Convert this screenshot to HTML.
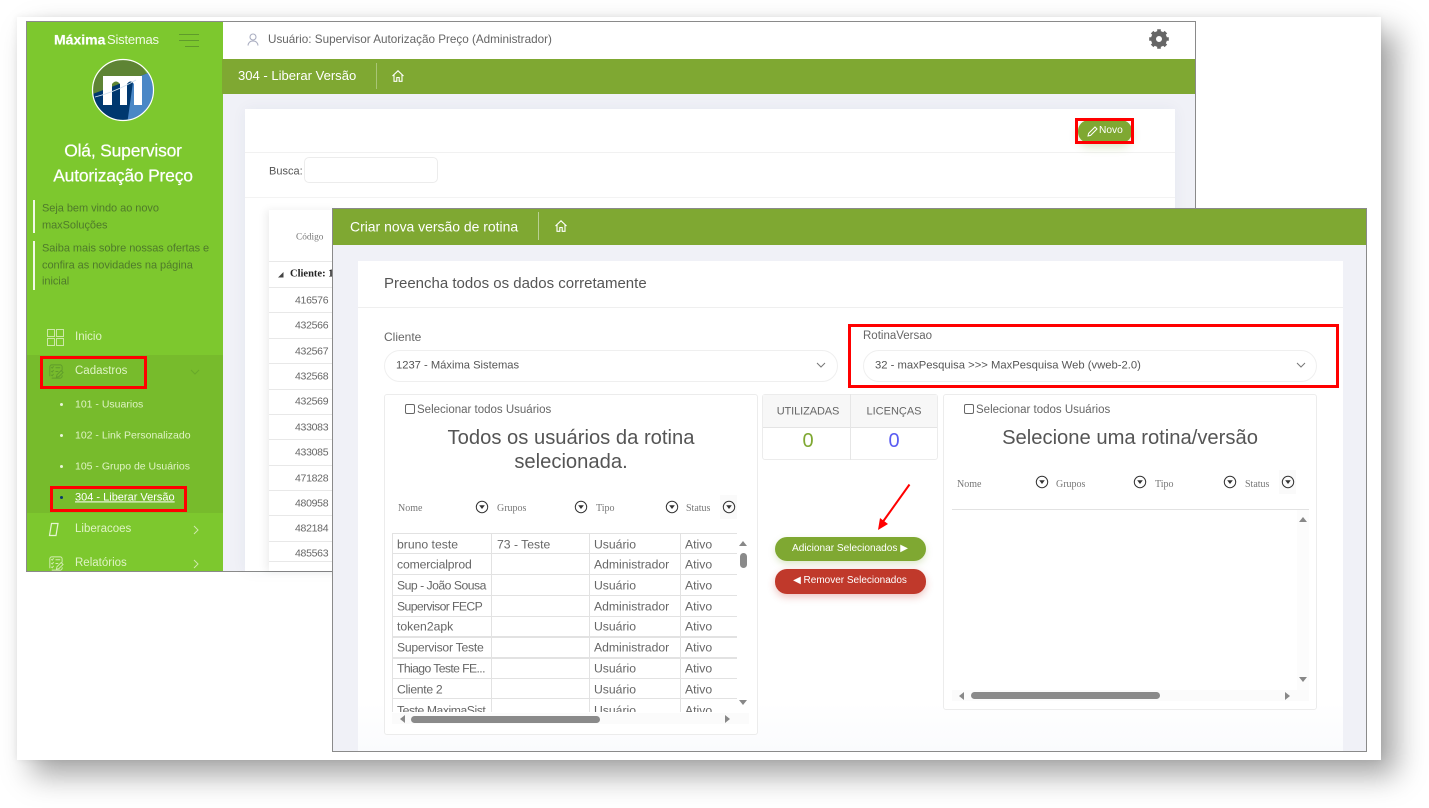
<!DOCTYPE html>
<html lang="pt-BR">
<head>
<meta charset="utf-8">
<title>Criar nova versão de rotina</title>
<style>
html,body{margin:0;padding:0;background:#fff}
body{width:1429px;height:808px;position:relative;overflow:hidden;font-family:"Liberation Sans",sans-serif;color:#555;filter:blur(.3px)}
div,span,svg{position:absolute;box-sizing:border-box}
.t{white-space:nowrap;transform:translateY(calc(-50% + 1px));line-height:1.2}
.c{transform:translate(-50%,calc(-50% + 1px));text-align:center}
.paper{left:17px;top:17px;width:1364px;height:743px;background:#fff;box-shadow:15px 15px 28px rgba(0,0,0,.36),0 0 7px rgba(0,0,0,.07)}
.win{border:1px solid #8a8a8a;overflow:hidden;background:#f0f1f7}
.red{border:3px solid #f00;z-index:5}
.side{font-size:11.500px;color:#dff3c4}
.sub{font-size:10.500px}
.note{font-size:11px;letter-spacing:-.05px;color:#4f7a2b;left:42px}
.num{font-size:10.500px;letter-spacing:-.3px;color:#666;left:295px}
.hl{height:1px;background:#e8e8e8;left:269px;width:70px}
.th{font-family:"Liberation Serif",serif;font-size:10px;color:#777;transform:translateY(calc(-50% + 2px))}
.row{font-size:12.200px;color:#666}
.panel{border:1px solid #ececec;border-radius:3px;background:#fff}
.sel{border:1px solid #efefef;border-radius:16px;background:#fff;height:32px}
.title{font-size:20.200px;color:#555}
.cb{width:10px;height:10px;border:1px solid #666;border-radius:2px;background:#fff}
.lbl{font-size:11.500px;color:#666}
.gl{background:#e2e2e2}
.bar{background:#8a8a8a;border-radius:4px}
.bold{text-shadow:0 0 .6px #fff}
</style>
</head>
<body>
<svg width="0" height="0" style="left:0;top:0">
  <defs>
    <symbol id="f" viewBox="0 0 14 14"><circle cx="7" cy="7" r="5.700" fill="none" stroke="#333" stroke-width="1"/><path d="M4.200 5.200h5.600L7 9z" fill="#333"/></symbol>
    <symbol id="h" viewBox="0 0 14 14"><path d="M1.500 7 7 1.800 12.500 7M3 6v6.300h2.800V8.500h2.400v3.800H11V6" fill="none" stroke="#fff" stroke-width="1.100"/></symbol>
    <symbol id="chk" viewBox="0 0 18 18"><path d="M3 14V4a2 2 0 0 1 2-2h9a2 2 0 0 1 2 2v4M16 13v1a2 2 0 0 1-2 2H5M9 5h5M9 9h3M4.500 4.500l1 1 1.500-2M4.500 8.500l1 1 1.500-2M4.500 12.500l1 1 1.500-2M10 15l.5-2.500L15 8l2 2-4.500 4.500z" fill="none" stroke="currentColor" stroke-width="1"/></symbol>
  </defs>
</svg>

<div class="paper"></div>

<!-- Back window -->
<div class="win" style="left:26px;top:21px;width:1170px;height:551px"></div>
<div style="left:27px;top:22px;width:196px;height:549px;background:#7dc82e"></div>
<div style="left:27px;top:355px;width:196px;height:158px;background:#77bb2c"></div>
<div style="left:223px;top:22px;width:972px;height:37px;background:#fff"></div>
<div style="left:222px;top:59px;width:973px;height:35px;background:#7fa832"></div>
<div style="left:245px;top:109px;width:930px;height:462px;background:#fff;box-shadow:0 0 14px rgba(40,50,90,.05)"></div>
<div style="left:245px;top:152px;width:930px;height:1px;background:#f1f1f1"></div>
<div style="left:245px;top:197px;width:930px;height:1px;background:#f3f3f3"></div>

<div class="t bold" style="left:54px;top:39px;font-size:14px;font-weight:700;color:#fff">Máxima</div>
<div class="t" style="left:107px;top:39px;font-size:13px;color:#f2fae6;letter-spacing:-.2px">Sistemas</div>
<div style="left:179px;top:34px;width:20px;height:1px;background:#5f9b2b"></div>
<div style="left:179px;top:40px;width:20px;height:1px;background:#5f9b2b"></div>
<div style="left:185px;top:46px;width:14px;height:1px;background:#5f9b2b"></div>

<svg style="left:90px;top:57px" width="66" height="66" viewBox="90 57 66 66">
  <defs><clipPath id="lc"><circle cx="123" cy="90" r="30"/></clipPath></defs>
  <g clip-path="url(#lc)">
    <rect x="90" y="57" width="66" height="66" fill="#5e8434"/>
    <path d="M138 60 156 60 156 78 147 74z" fill="#6fbf3e"/>
    <path d="M90 95 147 73.500 156 70V125H90z" fill="#00386f"/>
    <path d="M133.500 78.500 147 73.500 156 70V125H127z" fill="#4a87c6"/>
    <path d="M103 105V76H142V105H134V84q-3.500-5-7 0V105H120V84q-4-5-8 0V105z" fill="#fff"/>
    <path d="M95 97Q115 92 136 80" fill="none" stroke="#cfe0ee" stroke-width=".9"/>
  </g>
  <circle cx="123" cy="90" r="30.500" fill="none" stroke="#fff" stroke-width="1.200"/>
</svg>

<div class="t c bold" style="left:123px;top:150px;font-size:17.500px;color:#fff;letter-spacing:-.2px">Olá, Supervisor</div>
<div class="t c bold" style="left:123px;top:175px;font-size:17.500px;color:#fff;letter-spacing:-.2px">Autorização Preço</div>

<div style="left:33px;top:200px;width:2px;height:33px;background:#f1f8e6"></div>
<div style="left:33px;top:241px;width:2px;height:49px;background:#f1f8e6"></div>
<div class="t note" style="top:208px">Seja bem vindo ao novo</div>
<div class="t note" style="top:225px">maxSoluções</div>
<div class="t note" style="top:248px">Saiba mais sobre nossas ofertas e</div>
<div class="t note" style="top:265px">confira as novidades na página</div>
<div class="t note" style="top:281px">inicial</div>

<svg style="left:47px;top:329px" width="17" height="17" viewBox="0 0 17 17" fill="none" stroke="#cde8a8" stroke-width="1"><rect x=".5" y=".5" width="7" height="7"/><rect x="9.500" y=".5" width="7" height="7"/><rect x=".5" y="9.500" width="7" height="7"/><rect x="9.500" y="9.500" width="7" height="7"/></svg>
<svg style="left:47px;top:363px;color:#5f9b2b" width="17" height="17"><use href="#chk"/></svg>
<svg style="left:48px;top:522px" width="12" height="15" viewBox="0 0 12 15" fill="none" stroke="#e6f5d2" stroke-width="1.200"><path d="M3.500 1.500h6.500L8 13.500H1.500z"/></svg>
<svg style="left:47px;top:555px;color:#d5edb5" width="17" height="17"><use href="#chk"/></svg>

<div class="t side" style="left:75px;top:337px">Inicio</div>
<div class="t side" style="left:75px;top:371px">Cadastros</div>
<div class="t side sub" style="left:75px;top:404px">101 - Usuarios</div>
<div class="t side sub" style="left:75px;top:435px">102 - Link Personalizado</div>
<div class="t side sub" style="left:75px;top:466px">105 - Grupo de Usuários</div>
<div class="t" style="left:75px;top:497px;font-size:11px;color:#fff;text-decoration:underline">304 - Liberar Versão</div>
<div class="t side" style="left:75px;top:529px">Liberacoes</div>
<div class="t side" style="left:75px;top:563px">Relatórios</div>
<div style="left:60px;top:403px;width:3px;height:3px;border-radius:50%;background:#e9f6d8"></div>
<div style="left:60px;top:434px;width:3px;height:3px;border-radius:50%;background:#e9f6d8"></div>
<div style="left:60px;top:465px;width:3px;height:3px;border-radius:50%;background:#e9f6d8"></div>
<div style="left:60px;top:496px;width:3px;height:3px;border-radius:50%;background:#0a3a6b"></div>
<svg style="left:190px;top:368px" width="10" height="8" fill="none" stroke="#68a82a"><path d="M1 2l4 4 4-4"/></svg>
<svg style="left:192px;top:525px" width="8" height="10" fill="none" stroke="#cfe9ac"><path d="M2 1l4 4-4 4"/></svg>
<svg style="left:192px;top:559px" width="8" height="10" fill="none" stroke="#cfe9ac"><path d="M2 1l4 4-4 4"/></svg>

<svg style="left:247px;top:33px" width="12" height="13" viewBox="0 0 12 13" fill="none" stroke="#a9adc0" stroke-width="1.100"><circle cx="6" cy="4" r="3"/><path d="M1 12.500c.4-3 2.400-4.500 5-4.500s4.600 1.500 5 4.500"/></svg>
<div class="t" style="left:268px;top:39px;font-size:11.700px;color:#666">Usuário: Supervisor Autorização Preço (Administrador)</div>
<svg style="left:1149px;top:29px" width="20" height="20" viewBox="0 0 20 20"><circle cx="10" cy="10" r="5.500" fill="none" stroke="#666" stroke-width="5"/><g stroke="#666" stroke-width="3.600"><path d="M10 .2v3M10 16.800v3M.2 10h3M16.800 10h3M3.100 3.100l2.100 2.100M14.800 14.800l2.100 2.100M3.100 16.900l2.100-2.100M14.800 5.200l2.100-2.100"/></g></svg>

<div class="t" style="left:238px;top:75px;font-size:13.050px;color:#fff">304 - Liberar Versão</div>
<div style="left:376px;top:63px;width:1px;height:26px;background:#a9c576"></div>
<svg style="left:391px;top:69px" width="14" height="14"><use href="#h"/></svg>

<div class="t" style="left:269px;top:171px;font-size:11px;color:#555">Busca:</div>
<div style="left:304px;top:157px;width:134px;height:26px;border:1px solid #ececec;border-radius:5px;background:#fff"></div>

<div style="left:1078px;top:120px;width:54px;height:23px;border-radius:11px;background:#7fa832;box-shadow:0 4px 9px rgba(127,168,50,.3)"></div>
<svg style="left:1087px;top:126px" width="11" height="11" viewBox="0 0 11 11" fill="none" stroke="#fff" stroke-width="1"><path d="M1 10l.6-2.600L8 1l2 2-6.400 6.400z"/></svg>
<div class="t" style="left:1099px;top:130px;font-size:10.200px;color:#fff">Novo</div>
<div class="red" style="left:1075px;top:118px;width:59px;height:26px"></div>

<!-- Back table -->
<div style="left:269px;top:210px;width:70px;height:361px;background:#fff;box-shadow:-3px 0 8px rgba(0,0,0,.07)"></div>
<div class="t th" style="left:296px;top:236px;font-size:9.300px">Código</div>
<div class="hl" style="top:261px"></div>
<svg style="left:278px;top:272px" width="6" height="6"><path d="M0 5.500h5.500V0z" fill="#444"/></svg>
<div class="t" style="left:290px;top:274px;font-family:'Liberation Serif',serif;font-weight:700;font-size:10.500px;color:#222;width:42px;overflow:hidden">Cliente: 1</div>
<div class="hl" style="top:287px"></div><div class="hl" style="top:312px"></div><div class="hl" style="top:338px"></div><div class="hl" style="top:363px"></div><div class="hl" style="top:389px"></div><div class="hl" style="top:414px"></div><div class="hl" style="top:439px"></div><div class="hl" style="top:465px"></div><div class="hl" style="top:490px"></div><div class="hl" style="top:515px"></div><div class="hl" style="top:541px"></div><div class="hl" style="top:561px"></div>
<div class="t num" style="top:300px">416576</div>
<div class="t num" style="top:325px">432566</div>
<div class="t num" style="top:351px">432567</div>
<div class="t num" style="top:376px">432568</div>
<div class="t num" style="top:401px">432569</div>
<div class="t num" style="top:427px">433083</div>
<div class="t num" style="top:452px">433085</div>
<div class="t num" style="top:478px">471828</div>
<div class="t num" style="top:503px">480958</div>
<div class="t num" style="top:528px">482184</div>
<div class="t num" style="top:553px">485563</div>

<div class="red" style="left:40px;top:356px;width:107px;height:33px"></div>
<div class="red" style="left:50px;top:486px;width:137px;height:26px"></div>

<!-- Front window -->
<div class="win" style="left:332px;top:208px;width:1035px;height:544px;z-index:2">
  <div style="left:0;top:0;width:1033px;height:36px;background:#7fa832"></div>
  <div style="left:25px;top:52px;width:985px;height:490px;background:linear-gradient(#fff 0,#fff 90%,#fafbfd 100%)"></div>
  <div style="left:25px;top:98px;width:985px;height:1px;background:#efefef"></div>
</div>

<div style="left:0;top:0;width:1429px;height:808px;z-index:3">
  <div class="t" style="left:350px;top:226px;font-size:13.950px;color:#fff">Criar nova versão de rotina</div>
  <div style="left:538px;top:212px;width:1px;height:28px;background:#b9d093"></div>
  <svg style="left:554px;top:219px" width="14" height="14"><use href="#h"/></svg>
  <div class="t" style="left:384px;top:283px;font-size:15px;color:#555">Preencha todos os dados corretamente</div>

  <div class="t" style="left:384px;top:336px;font-size:12px;color:#666">Cliente</div>
  <div class="sel" style="left:384px;top:350px;width:454px"></div>
  <div class="t" style="left:396px;top:365px;font-size:11.200px;color:#555">1237 - Máxima Sistemas</div>
  <svg style="left:816px;top:362px" width="10" height="7" fill="none" stroke="#777"><path d="M1 1l4 4 4-4"/></svg>

  <div class="t" style="left:863px;top:336px;font-size:11.500px;color:#666">RotinaVersao</div>
  <div class="sel" style="left:863px;top:350px;width:454px"></div>
  <div class="t" style="left:875px;top:365px;font-size:11.250px;color:#555">32 - maxPesquisa &gt;&gt;&gt; MaxPesquisa Web (vweb-2.0)</div>
  <svg style="left:1296px;top:362px" width="10" height="7" fill="none" stroke="#777"><path d="M1 1l4 4 4-4"/></svg>
  <div class="red" style="left:848px;top:324px;width:491px;height:64px"></div>

  <!-- Left panel -->
  <div class="panel" style="left:384px;top:394px;width:374px;height:341px"></div>
  <div class="cb" style="left:405px;top:404px"></div>
  <div class="t lbl" style="left:417px;top:410px">Selecionar todos Usuários</div>
  <div class="t c title" style="left:571px;top:437px">Todos os usuários da rotina</div>
  <div class="t c title" style="left:571px;top:461px">selecionada.</div>

  <div class="t th" style="left:398px;top:507px">Nome</div>
  <div class="t th" style="left:497px;top:507px">Grupos</div>
  <div class="t th" style="left:596px;top:507px">Tipo</div>
  <div class="t th" style="left:686px;top:507px">Status</div>
  <div style="left:720px;top:495px;width:17px;height:24px;background:#fafafa"></div>
  <svg style="left:475px;top:500px" width="14" height="14"><use href="#f"/></svg>
  <svg style="left:574px;top:500px" width="14" height="14"><use href="#f"/></svg>
  <svg style="left:665px;top:500px" width="14" height="14"><use href="#f"/></svg>
  <svg style="left:722px;top:500px" width="14" height="14"><use href="#f"/></svg>

  <div style="left:392px;top:533px;width:345px;height:179px;overflow:hidden">
    <div class="gl" style="left:0;top:0;width:345px;height:1px"></div>
    <div class="gl" style="left:0;top:20px;width:345px;height:1px"></div>
    <div class="gl" style="left:0;top:41px;width:345px;height:1px"></div>
    <div class="gl" style="left:0;top:62px;width:345px;height:1px"></div>
    <div class="gl" style="left:0;top:83px;width:345px;height:1px"></div>
    <div class="gl" style="left:0;top:103px;width:345px;height:2px"></div>
    <div class="gl" style="left:0;top:124px;width:345px;height:2px"></div>
    <div class="gl" style="left:0;top:145px;width:345px;height:1px"></div>
    <div class="gl" style="left:0;top:165px;width:345px;height:1px"></div>
    <div class="gl" style="left:0;top:0;width:1px;height:179px"></div>
    <div class="gl" style="left:99px;top:0;width:1px;height:179px"></div>
    <div class="gl" style="left:197px;top:0;width:1px;height:179px"></div>
    <div class="gl" style="left:288px;top:0;width:1px;height:179px"></div>
    <div class="t row" style="left:5px;top:11px">bruno teste</div><div class="t row" style="left:105px;top:11px">73 - Teste</div><div class="t row" style="left:202px;top:11px">Usuário</div><div class="t row" style="left:293px;top:11px">Ativo</div>
    <div class="t row" style="left:5px;top:31px;letter-spacing:-.15px">comercialprod</div><div class="t row" style="left:202px;top:31px">Administrador</div><div class="t row" style="left:293px;top:31px">Ativo</div>
    <div class="t row" style="left:5px;top:52px;letter-spacing:-.5px">Sup - João Sousa</div><div class="t row" style="left:202px;top:52px">Usuário</div><div class="t row" style="left:293px;top:52px">Ativo</div>
    <div class="t row" style="left:5px;top:73px;letter-spacing:-.6px">Supervisor FECP</div><div class="t row" style="left:202px;top:73px">Administrador</div><div class="t row" style="left:293px;top:73px">Ativo</div>
    <div class="t row" style="left:5px;top:93px">token2apk</div><div class="t row" style="left:202px;top:93px">Usuário</div><div class="t row" style="left:293px;top:93px">Ativo</div>
    <div class="t row" style="left:5px;top:114px;letter-spacing:-.25px">Supervisor Teste</div><div class="t row" style="left:202px;top:114px">Administrador</div><div class="t row" style="left:293px;top:114px">Ativo</div>
    <div class="t row" style="left:5px;top:135px;letter-spacing:-.6px">Thiago Teste FE...</div><div class="t row" style="left:202px;top:135px">Usuário</div><div class="t row" style="left:293px;top:135px">Ativo</div>
    <div class="t row" style="left:5px;top:156px;letter-spacing:-.3px">Cliente 2</div><div class="t row" style="left:202px;top:156px">Usuário</div><div class="t row" style="left:293px;top:156px">Ativo</div>
    <div class="t row" style="left:5px;top:177px;letter-spacing:-.45px">Teste MaximaSist</div><div class="t row" style="left:202px;top:177px">Usuário</div><div class="t row" style="left:293px;top:177px">Ativo</div>
  </div>
  <svg style="left:738px;top:540px" width="10" height="7"><path d="M1 6h8L5 1z" fill="#888"/></svg>
  <div class="bar" style="left:740px;top:553px;width:7px;height:15px"></div>
  <svg style="left:738px;top:699px" width="10" height="7"><path d="M1 1h8L5 6z" fill="#888"/></svg>
  <div style="left:392px;top:713px;width:357px;height:11px;background:#fbfbfb"></div>
  <svg style="left:399px;top:714px" width="7" height="10"><path d="M6 1v8L1 5z" fill="#888"/></svg>
  <div class="bar" style="left:411px;top:716px;width:189px;height:7px"></div>
  <svg style="left:724px;top:714px" width="7" height="10"><path d="M1 1v8l5-4z" fill="#888"/></svg>

  <!-- Middle -->
  <div class="panel" style="left:762px;top:394px;width:176px;height:66px"></div>
  <div style="left:763px;top:395px;width:174px;height:33px;background:#f7f7f7;border-bottom:1px solid #e4e4e4"></div>
  <div style="left:850px;top:394px;width:1px;height:66px;background:#e6e6e6"></div>
  <div class="t c" style="left:808px;top:411px;font-size:11px;letter-spacing:-.1px;color:#666">UTILIZADAS</div>
  <div class="t c" style="left:894px;top:411px;font-size:11px;color:#666">LICENÇAS</div>
  <div class="t c" style="left:808px;top:440px;font-size:20px;color:#7fa832">0</div>
  <div class="t c" style="left:894px;top:440px;font-size:20px;color:#5a5cf2">0</div>

  <svg style="left:870px;top:480px" width="45" height="55"><path d="M39.500 4.500 12 43" stroke="#f00" stroke-width="2" fill="none"/><path d="M8 50l2-12 8 6z" fill="#f00"/></svg>

  <div style="left:775px;top:537px;width:151px;height:24px;border-radius:12px;background:#7fa832;box-shadow:0 3px 7px rgba(127,168,50,.25)"></div>
  <div class="t c" style="left:850px;top:548px;font-size:10.100px;color:#fff">Adicionar Selecionados ▶</div>
  <div style="left:775px;top:569px;width:151px;height:25px;border-radius:12px;background:#c0392b;box-shadow:0 3px 8px rgba(192,57,43,.3)"></div>
  <div class="t c" style="left:850px;top:580px;font-size:10px;color:#fff">◀ Remover Selecionados</div>

  <!-- Right panel -->
  <div class="panel" style="left:943px;top:394px;width:374px;height:316px"></div>
  <div class="cb" style="left:964px;top:404px"></div>
  <div class="t lbl" style="left:976px;top:410px">Selecionar todos Usuários</div>
  <div class="t c title" style="left:1130px;top:437px">Selecione uma rotina/versão</div>
  <div class="t th" style="left:957px;top:483px">Nome</div>
  <div class="t th" style="left:1056px;top:483px">Grupos</div>
  <div class="t th" style="left:1155px;top:483px">Tipo</div>
  <div class="t th" style="left:1245px;top:483px">Status</div>
  <div style="left:1279px;top:470px;width:17px;height:24px;background:#fafafa"></div>
  <svg style="left:1035px;top:475px" width="14" height="14"><use href="#f"/></svg>
  <svg style="left:1133px;top:475px" width="14" height="14"><use href="#f"/></svg>
  <svg style="left:1223px;top:475px" width="14" height="14"><use href="#f"/></svg>
  <svg style="left:1281px;top:475px" width="14" height="14"><use href="#f"/></svg>
  <div style="left:952px;top:509px;width:357px;height:1px;background:#e2e2e2"></div>
  <div style="left:1297px;top:510px;width:12px;height:180px;background:#fcfcfc"></div>
  <svg style="left:1298px;top:516px" width="10" height="7"><path d="M1 6h8L5 1z" fill="#888"/></svg>
  <svg style="left:1298px;top:676px" width="10" height="7"><path d="M1 1h8L5 6z" fill="#888"/></svg>
  <div style="left:952px;top:690px;width:357px;height:11px;background:#fbfbfb"></div>
  <svg style="left:958px;top:691px" width="7" height="10"><path d="M6 1v8L1 5z" fill="#888"/></svg>
  <div class="bar" style="left:971px;top:692px;width:189px;height:7px"></div>
  <svg style="left:1284px;top:691px" width="7" height="10"><path d="M1 1v8l5-4z" fill="#888"/></svg>
</div>
</body>
</html>
